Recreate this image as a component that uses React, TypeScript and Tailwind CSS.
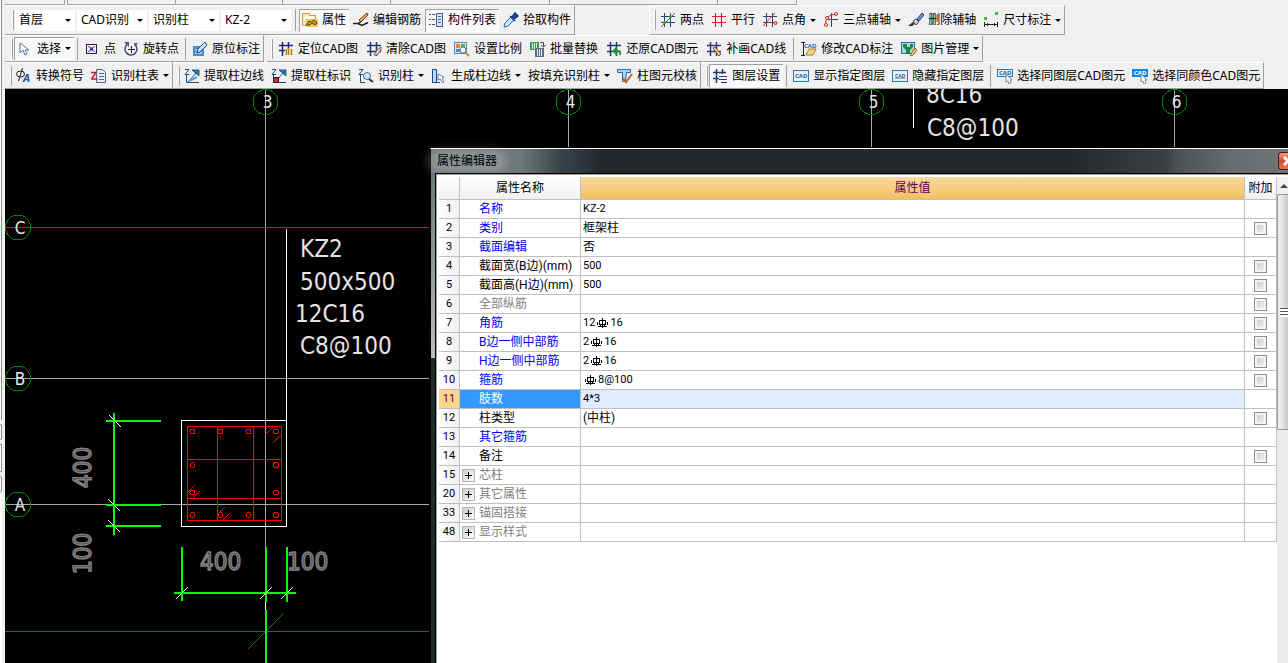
import type { ReactNode } from "react";
import clsx from "clsx";

const grid = "M4.500 1v14M10.500 1v14M1 4.500h14M1 10.500h14";

const icons = {
  cursor: <path d="M3 2v10l3-3 2 5 2-1-2-4h4z" fill="#fff" stroke="#5a6f9a" />,
  point: (
    <>
      <rect x="2.5" y="3.5" width="10" height="9" fill="#eef" stroke="#23235f" />
      <path d="M4 5l7 6M11 5l-7 6" stroke="#d22" />
      <rect x="6" y="6.500" width="3" height="3" fill="#23c" />
    </>
  ),
  rotate: (
    <>
      <path d="M4 3.500a6 6 0 1 0 8 0" fill="none" stroke="#3c4f7c" strokeWidth="1.500" />
      <path d="M1 1h5v5zM15 2l-4 0 1 4z" fill="#3c5f8c" />
      <path d="M8.500 5v7M5 8.500h7" stroke="#222" />
    </>
  ),
  annotate: (
    <>
      <rect x="1" y="5" width="11" height="10" fill="#4d8bd0" />
      <path d="M3 9h7M3 12h7" stroke="#fff" />
      <path d="M5 12l1-4 7-7 2 3-7 7z" fill="#cfe3f8" stroke="#1d4f93" />
    </>
  ),
  props: (
    <>
      <path d="M0.500 1.500h7v2h6v10h-13z" fill="#fbe7b5" stroke="#d09a45" />
      <path d="M2 5.500h11" stroke="#fff" strokeWidth="2" />
      <rect x="4" y="7" width="12" height="8" fill="#f0c453" />
      <path d="M4 13l3-4 2 1 3-2 3 3-2 2-3-2-2 2z" fill="#c89a2c" stroke="#5b4310" />
    </>
  ),
  pen: (
    <>
      <path d="M6 8l8-7 1 2-7 7z" fill="#f2b05c" stroke="#6b3513" />
      <path d="M0 11.500h5l3-2M5 11.500l4 2 6-3" fill="none" stroke="#222" strokeWidth="1.500" />
    </>
  ),
  list: (
    <>
      <rect x="8.500" y="1.500" width="6" height="13" fill="#dce9fa" stroke="#3b5f99" />
      <path d="M10 4.500h3M10 7.500h3M10 10.500h3" stroke="#3b5f99" />
      <path d="M1 2.500h2M1 7.500h2M1 12.500h2M4 2.500h3M4 7.500h3M4 12.500h3" stroke="#456" />
    </>
  ),
  pick: (
    <>
      <path d="M1 15l1-4 6-6 3 3-6 6z" fill="#cfe6fb" stroke="#2a69ad" />
      <path d="M7 4l5 5M9 5l3-4 3 3-4 3z" fill="#1d4aa0" stroke="#163c80" strokeWidth="1.500" />
    </>
  ),
  twoPoint: (
    <>
      <path d={grid} stroke="#3b3f7d" />
      <path d="M1 15L15 1" stroke="#c33" />
      <circle cx="10.500" cy="4.500" r="1.500" fill="#2a2" />
      <circle cx="4.500" cy="10.500" r="1.500" fill="#2a2" />
    </>
  ),
  parallel: (
    <>
      <path d="M4.500 1v14M10.500 1v14" stroke="#3b3f7d" />
      <path d="M1 4.500h14M1 10.500h14" stroke="#d22" />
    </>
  ),
  angle: (
    <>
      <path d={grid} stroke="#3b3f7d" />
      <path d="M1 14L13 1" stroke="#d22" />
      <circle cx="13.500" cy="11" r="1.500" fill="#fbb" stroke="#d22" />
    </>
  ),
  threePoint: (
    <>
      <path d="M8.500 1v14M3 7.500h12" stroke="#3b3f7d" />
      <path d="M3 13Q1 3 13 2" fill="none" stroke="#d22" />
      <circle cx="3" cy="13" r="1.500" fill="#fff" stroke="#d22" />
      <circle cx="4" cy="6" r="1.500" fill="#fff" stroke="#d22" />
      <circle cx="13" cy="2" r="1.500" fill="#fff" stroke="#d22" />
    </>
  ),
  eraseAxis: (
    <>
      <path d="M9 7l5-6 2 2-5 6z" fill="#6c93d4" stroke="#27457f" />
      <path d="M5 9l3-2 3 3-3 3z" fill="#e6c4dc" stroke="#555" />
      <path d="M0 14l5-4 2 2-3 2z" fill="#25324f" />
    </>
  ),
  dimension: (
    <>
      <rect x="1" y="5" width="3" height="3" fill="#4b4" />
      <rect x="12" y="0" width="3" height="3" fill="#4b4" />
      <path d="M1.500 10v5M14.500 10v5M2 12.500h12M4.500 11v3M11.500 11v3" stroke="#222" />
    </>
  ),
  locate: (
    <>
      <path d="M4.500 1v14M10.500 1v8M1 4.500h14M1 9.500h8" stroke="#22227c" strokeWidth="1.500" />
      <path d="M7 8h8v6H7z" fill="#f1cf7d" />
      <path d="M8.500 8v6M10.500 7v7M13.500 8v6" stroke="#a97b22" />
    </>
  ),
  clean: (
    <>
      <path d={grid} stroke="#1c3a66" strokeWidth="1.500" />
      <path d="M8 14l3-5 4-3v3l-4 5z" fill="#f2d9a3" stroke="#6d5690" />
    </>
  ),
  scale: (
    <>
      <rect x="0.500" y="1.500" width="12" height="11" fill="#d9ebfb" stroke="#5b87b5" />
      <rect x="2" y="3" width="4" height="4" fill="#e8853a" />
      <rect x="7" y="3" width="4" height="4" fill="#58a858" />
      <rect x="2" y="8" width="4" height="3" fill="#4a85d0" />
      <circle cx="9" cy="9" r="3" fill="#eef8ff" stroke="#678" />
      <path d="M11 11l4 4" stroke="#c78b3c" strokeWidth="2" />
    </>
  ),
  replace: (
    <>
      <rect x="0" y="1" width="9" height="8" fill="#3f9a55" />
      <path d="M2.500 2v6M4.500 2v6M6.500 2v6" stroke="#d5f2dc" />
      <path d="M10 1.500h3.500v4M11 4l2.500 2L16 4" fill="none" stroke="#334a66" />
      <rect x="5" y="7" width="9" height="9" fill="#5b6b80" />
      <path d="M7.500 8v7M9.500 8v7M11.500 8v7" stroke="#e8edf3" />
    </>
  ),
  restore: (
    <>
      <path d={grid} stroke="#1c3a66" strokeWidth="1.500" />
      <path d="M8 10h4q3 0 2 4M11 6.500l-3.500 3.500 3.500 3.500" fill="none" stroke="#26963a" strokeWidth="2" />
    </>
  ),
  draw: (
    <>
      <path d={grid} stroke="#34347a" strokeWidth="1.500" />
      <path d="M7 7l2-1 6 7-2 2z" fill="#f0cb7b" stroke="#77592a" />
    </>
  ),
  editNote: (
    <>
      <path d="M0 1.500h4M2.500 2v12M0 14.500h4" stroke="#222" fill="none" />
      <text x="3" y="7" fontSize="6" fontWeight="700" fill="#1c66b8">CAD</text>
      <path d="M5 14l3-6h7l-3 6z" fill="#f3d58b" stroke="#a87e2d" />
    </>
  ),
  image: (
    <>
      <rect x="0.500" y="1.500" width="13" height="11" fill="#a6d6f6" stroke="#2b6aa5" />
      <path d="M2 3h4v3h3V3h3v3L9 9v3H5V9L2 6z" fill="#1f8a35" />
      <path d="M9 14l5-7 2 2-5 6z" fill="#f3c767" stroke="#8a6521" />
    </>
  ),
  symbol: (
    <>
      <ellipse cx="4.500" cy="6" rx="4" ry="3" fill="none" stroke="#222" />
      <path d="M6.500 0L2.500 13" stroke="#222" />
      <text x="7" y="14" fontSize="11" fontStyle="italic" fontWeight="700" fill="#1d56a5">A</text>
    </>
  ),
  columnTable: (
    <>
      <path d="M5.500 1.500h6l3 3v10h-9z" fill="#e7eefb" stroke="#51678e" />
      <path d="M8 5.500h5M8 8.500h5M8 11.500h5" stroke="#51678e" />
      <path d="M0 4.500h5L0.500 11h6" fill="none" stroke="#c21f2c" strokeWidth="1.500" />
    </>
  ),
  edgeLine: (
    <>
      <path d="M1 1.500h4l-4 5h4M2.500 7v7.500H15" fill="none" stroke="#1c4e80" />
      <path d="M4 14L13 4M8 2h7v6z" fill="#2a7ab5" stroke="#1c5a92" />
      <path d="M5 13l8-4" stroke="#69c" strokeWidth="2" />
    </>
  ),
  edgeMark: (
    <>
      <path d="M1 1.500h4l-4 5h4M2.500 7v7.500H15" fill="none" stroke="#1c4e80" />
      <path d="M4 14L13 4M8 2h7v6z" fill="#2a7ab5" stroke="#1c5a92" />
      <rect x="2.500" y="9.500" width="5" height="5" fill="#c8302a" stroke="#223" />
    </>
  ),
  findColumn: (
    <>
      <path d="M1 1.500h4l-4 5h4M2.500 7v7.500H7" fill="none" stroke="#1c4e80" />
      <circle cx="9" cy="8" r="3.500" fill="#cfe9f7" stroke="#4d708e" />
      <path d="M11 11l4 3" stroke="#333" strokeWidth="2" />
    </>
  ),
  makeEdge: (
    <>
      <path d="M1.500 1.500h4v13h-4z" fill="#bcd6f5" stroke="#23458a" />
      <path d="M1 14.500h8" stroke="#23458a" />
      <path d="M7 6v6l2-1 3 4 1-1-2-4 2-1z" fill="#fff" stroke="#6f7f9a" />
    </>
  ),
  check: (
    <>
      <path d="M0.500 1.500h13v3h-4l-1 9h-3v-9h-5z" fill="#a8d4f2" stroke="#1f6ba5" />
      <path d="M6 10l3 4 6-8" fill="none" stroke="#b5652c" strokeWidth="2" />
    </>
  ),
  layers: (
    <>
      <path d="M4.500 1v14M10.500 1v5M1 4.500h13M1 10.500h6" stroke="#1c3a66" strokeWidth="1.500" />
      <path d="M7 8.500h8M7 11.500h8M9 14.500h6" stroke="#23309a" />
    </>
  ),
  cadShow: (
    <>
      <rect x="0.500" y="2.500" width="15" height="11" fill="#e8f4fd" stroke="#2779b8" />
      <text x="2" y="10" fontSize="6" fontWeight="700" fill="#1566ad">CAD</text>
    </>
  ),
  cadHide: (
    <>
      <rect x="0.500" y="2.500" width="15" height="11" fill="#e8f4fd" stroke="#2779b8" />
      <text x="3" y="10" fontSize="5" fontWeight="700" fill="#345f8d">CAD</text>
      <path d="M2 10.500h12" stroke="#9bb" />
    </>
  ),
  cadLayer: (
    <>
      <rect x="0.500" y="1.500" width="15" height="7" fill="#e8f4fd" stroke="#2779b8" />
      <text x="2" y="7" fontSize="6" fontWeight="700" fill="#1566ad">CAD</text>
      <path d="M9 6v8l2-1 1 3 2-1-1-3h2z" fill="#fff" stroke="#7c8795" />
    </>
  ),
  cadColor: (
    <>
      <rect x="0" y="1" width="16" height="8" fill="#1687e8" />
      <text x="2" y="7" fontSize="6" fontWeight="700" fill="#fff">CAD</text>
      <path d="M9 6v8l2-1 1 3 2-1-1-3h2z" fill="#fff" stroke="#7c8795" />
    </>
  ),
};

type IconName = keyof typeof icons;

function Arrow() {
  return <span className="border-x-[3px] border-t-[3px] border-x-transparent border-t-black" />;
}

function Tool({
  icon,
  label,
  menu,
  pressed,
}: {
  icon?: IconName;
  label: string;
  menu?: boolean;
  pressed?: boolean;
}) {
  return (
    <button
      type="button"
      className={clsx(
        "flex h-[23px] shrink-0 items-center gap-1 px-[3px] whitespace-nowrap",
        pressed && "bg-[#f9f9f9] shadow-[inset_1px_1px_0_#a0a0a0,inset_-1px_-1px_0_#fff]",
      )}
    >
      {icon && (
        <svg viewBox="0 0 16 16" className="size-4 shrink-0" aria-hidden="true">
          {icons[icon]}
        </svg>
      )}
      <span>{label}</span>
      {menu && <Arrow />}
    </button>
  );
}

function Bar({ children, className = "gap-px pl-[5px]" }: { children: ReactNode; className?: string }) {
  return (
    <div
      className={clsx(
        "flex shrink-0 items-center border-t border-r border-b border-t-white border-r-[#a0a0a0] border-b-[#a0a0a0]",
        className,
      )}
    >
      <span className="h-5 w-0.5 border-r border-l border-l-white border-r-[#a0a0a0]" />
      {children}
    </div>
  );
}

function Separator() {
  return <span className="mx-0.5 h-[22px] w-px bg-[#a0a0a0]" />;
}

function Combo({ value, label, className }: { value: string; label: string; className: string }) {
  return (
    <div className={clsx("relative mr-px", className)}>
      <select
        aria-label={label}
        defaultValue={value}
        className="block h-[21px] w-full appearance-none bg-white pl-1 outline-none"
      >
        <option>{value}</option>
      </select>
      <span className="pointer-events-none absolute inset-y-0 right-0 flex w-3.5 items-center justify-center">
        <Arrow />
      </span>
    </div>
  );
}

function Toolbars() {
  return (
    <header className="overflow-hidden bg-[#f0f0f0]">
      <div className="flex h-[5px]">
        <div className="w-[60px] border-r border-b border-[#a0a0a0]" />
        <div className="ml-0.5 w-[109px] border-x border-b border-[#a0a0a0]" />
        <div className="w-[107px] border-r border-b border-[#a0a0a0]" />
        <div className="w-[108px] border-r border-b border-[#a0a0a0]" />
        <div className="w-[159px] border-r border-b border-[#a0a0a0]" />
        <div className="w-[168px] border-r border-b border-[#a0a0a0]" />
        <div className="w-[79px] border-r border-b border-[#a0a0a0]" />
      </div>
      <div className="flex h-[30px] gap-[74px]">
        <Bar className="gap-px pl-[7px]">
          <Combo label="楼层" value="首层" className="w-[60px]" />
          <Combo label="构件类型" value="CAD识别" className="w-[70px]" />
          <Combo label="构件" value="识别柱" className="w-[70px]" />
          <Combo label="构件名称" value="KZ-2" className="w-[70px]" />
          <Separator />
          <Tool icon="props" label="属性" pressed />
          <Tool icon="pen" label="编辑钢筋" />
          <Tool icon="list" label="构件列表" pressed />
          <Tool icon="pick" label="拾取构件" />
        </Bar>
        <Bar className="gap-px border-l border-l-white pl-1">
          <Tool icon="twoPoint" label="两点" />
          <Tool icon="parallel" label="平行" />
          <Tool icon="angle" label="点角" menu />
          <Tool icon="threePoint" label="三点辅轴" menu />
          <Tool icon="eraseAxis" label="删除辅轴" />
          <Tool icon="dimension" label="尺寸标注" menu />
        </Bar>
      </div>
      <div className="flex h-[27px] gap-[3px]">
        <Bar className="gap-px pl-1.5">
          <Tool icon="cursor" label="选择" menu pressed />
          <Separator />
          <Tool icon="point" label="点" />
          <Tool icon="rotate" label="旋转点" />
          <Separator />
          <Tool icon="annotate" label="原位标注" />
        </Bar>
        <Bar className="gap-0.5 pl-1">
          <Tool icon="locate" label="定位CAD图" />
          <Tool icon="clean" label="清除CAD图" />
          <Tool icon="scale" label="设置比例" />
          <Tool icon="replace" label="批量替换" />
          <Tool icon="restore" label="还原CAD图元" />
          <Tool icon="draw" label="补画CAD线" />
          <Separator />
          <Tool icon="editNote" label="修改CAD标注" />
          <Tool icon="image" label="图片管理" menu />
        </Bar>
      </div>
      <div className="flex h-[27px]">
        <Bar>
          <Tool icon="symbol" label="转换符号" />
          <Tool icon="columnTable" label="识别柱表" menu />
        </Bar>
        <Bar>
          <Tool icon="edgeLine" label="提取柱边线" />
          <Tool icon="edgeMark" label="提取柱标识" />
          <Tool icon="findColumn" label="识别柱" menu />
          <Tool icon="makeEdge" label="生成柱边线" menu />
          <Tool label="按填充识别柱" menu />
          <Tool icon="check" label="柱图元校核" />
        </Bar>
        <Bar>
          <Tool icon="layers" label="图层设置" pressed />
          <Separator />
          <Tool icon="cadShow" label="显示指定图层" />
          <Tool icon="cadHide" label="隐藏指定图层" />
          <Separator />
          <Tool icon="cadLayer" label="选择同图层CAD图元" />
          <Tool icon="cadColor" label="选择同颜色CAD图元" />
        </Bar>
      </div>
    </header>
  );
}

const bubbles = [
  { label: "3", x: 260.5, y: 13 },
  { label: "4", x: 563.5, y: 13 },
  { label: "5", x: 866.5, y: 13 },
  { label: "6", x: 1169.5, y: 13 },
  { label: "C", x: 13, y: 138.5 },
  { label: "B", x: 13, y: 289.5 },
  { label: "A", x: 13, y: 415.5 },
];

const rebars = [
  [187.5, 342.5], [215.5, 342.5], [243.5, 342.5], [271, 342.5],
  [187.5, 376], [271, 376],
  [187.5, 403.5], [271, 403.5],
  [187.5, 426], [215.5, 426], [243.5, 426], [271, 426],
];

function Drawing() {
  return (
    <svg
      className="absolute inset-0 size-full font-['DejaVu_Sans_Condensed','DejaVu_Sans',sans-serif]"
      fill="none"
      shapeRendering="crispEdges"
    >
      {/* axes */}
      <path d="M260.5 0V458M563.5 0V58M866.5 0V58M1169.5 0V58M0 289.5H424M0 415.5H424" stroke="#a9a9a9" />
      <path d="M0 138.5H424" stroke="#f00" />
      <path d="M0 542.5H424M243 560L279 524" stroke="#008000" />
      {bubbles.map((b) => (
        <g key={b.label}>
          <circle cx={b.x} cy={b.y} r="12.5" stroke="#008000" />
          <text x={b.x + 2} y={b.y + 6} textAnchor="middle" fontSize="17" fill="#e8e8e8">
            {b.label}
          </text>
        </g>
      ))}

      {/* column section */}
      <path d="M281.5 140V331M176.5 331.5h105v106h-105zM908.5 0V39M260.5 513V521" stroke="#fff" />
      <path
        d="M182.5 337.5h94v94h-94zM212.5 338v93M248.5 338v93M183 370.5h93M183 409.5h93M260 346l8-8M268 354l8-8M183 403l7-7M188 409l7-7M213 425l7-7M218 431l7-7"
        stroke="#f00"
      />
      {rebars.map(([x, y]) => (
        <circle key={`${x}-${y}`} cx={x} cy={y} r="2.500" stroke="#f00" />
      ))}

      {/* dimensions */}
      <path
        d="M109 324V446M101 332H156M101 416H156M101 437H156M177 458V512M261 458V513M282 458V513M169 504H291M261 521V1200"
        stroke="#0f0"
        strokeWidth="2"
      />
      <path
        d="M104 326l12 12M103 410l12 12M103 431l12 12M171 510l12-12M255 510l12-12M276 510l12-12"
        stroke="#fff"
      />
      <g fontSize="24" fill="#222" stroke="#808080" strokeWidth="1.500">
        <text x="195" y="481">400</text>
        <text x="282" y="481">100</text>
        <text transform="translate(86 399) rotate(-90)">400</text>
        <text transform="translate(86 485) rotate(-90)">100</text>
      </g>
      <g fontSize="24" fill="#e4e4e4">
        <text x="295" y="168">KZ2</text>
        <text x="295" y="201">500x500</text>
        <text x="290" y="233">12C16</text>
        <text x="295" y="265">C8@100</text>
        <text x="921" y="14">8C16</text>
        <text x="922" y="47">C8@100</text>
      </g>
    </svg>
  );
}

type Row = {
  no: number;
  name: string;
  value?: string;
  tone?: "blue" | "gray";
  check?: boolean;
  group?: boolean;
  selected?: boolean;
};

const rows: Row[] = [
  { no: 1, name: "名称", value: "KZ-2", tone: "blue" },
  { no: 2, name: "类别", value: "框架柱", tone: "blue", check: true },
  { no: 3, name: "截面编辑", value: "否", tone: "blue" },
  { no: 4, name: "截面宽(B边)(mm)", value: "500", check: true },
  { no: 5, name: "截面高(H边)(mm)", value: "500", check: true },
  { no: 6, name: "全部纵筋", tone: "gray", check: true },
  { no: 7, name: "角筋", value: "12Φ16", tone: "blue", check: true },
  { no: 8, name: "B边一侧中部筋", value: "2Φ16", tone: "blue", check: true },
  { no: 9, name: "H边一侧中部筋", value: "2Φ16", tone: "blue", check: true },
  { no: 10, name: "箍筋", value: "Φ8@100", tone: "blue", check: true },
  { no: 11, name: "肢数", value: "4*3", tone: "blue", selected: true },
  { no: 12, name: "柱类型", value: "(中柱)", check: true },
  { no: 13, name: "其它箍筋", tone: "blue" },
  { no: 14, name: "备注", check: true },
  { no: 15, name: "芯柱", tone: "gray", group: true },
  { no: 20, name: "其它属性", tone: "gray", group: true },
  { no: 33, name: "锚固搭接", tone: "gray", group: true },
  { no: 48, name: "显示样式", tone: "gray", group: true },
];

// HRB400 bar sign, drawn because no font carries it
function RebarSign() {
  return (
    <svg viewBox="0 0 11 10" className="mx-0.5 h-2.5 w-[11px]" fill="none" stroke="#000" role="img" aria-label="三级钢">
      <path d="M2.500 2.500h6v4h-6zM0.500 4v3M5.500 0v10M3.500 6v3M7.500 6v3M1 8.500h9M10.500 4v3" shapeRendering="crispEdges" />
    </svg>
  );
}

function Value({ text }: { text: string }) {
  const [before, after] = text.split("Φ");
  if (after === undefined) return <>{text}</>;
  return (
    <>
      {before}
      <RebarSign />
      {after}
    </>
  );
}

function nameColor(row: Row) {
  if (row.selected) return "bg-[#3399ff] text-white";
  if (row.tone === "blue") return "text-[#0000ff]";
  if (row.tone === "gray") return "text-[#808080]";
  return "text-black";
}

function PropertyTable() {
  return (
    <table className="w-full table-fixed border-separate border-spacing-0 font-[Roboto,'Noto_Sans_CJK_SC',sans-serif] text-xs leading-[18px] [&_td]:border-r [&_td]:border-b [&_td]:border-[#c0c0c0] [&_td]:p-0 [&_td]:align-top [&_th]:border-r [&_th]:border-b [&_th]:border-[#c0c0c0] [&_th]:p-0 [&_th]:font-normal">
      <colgroup>
        <col className="w-[21px]" />
        <col className="w-[121px]" />
        <col />
        <col className="w-8" />
      </colgroup>
      <thead>
        <tr className="h-[23px] bg-linear-to-b from-white to-[#f0f0f0]">
          <th />
          <th scope="col">属性名称</th>
          <th scope="col" className="bg-linear-to-b from-[#f9d99f] to-[#f1c15f] text-[#5a0050]">
            属性值
          </th>
          <th scope="col" className="whitespace-nowrap">附加</th>
        </tr>
      </thead>
      <tbody>
        {rows.map((row) => (
          <tr key={row.no} className="h-[19px]">
            <td
              className={clsx(
                "text-center text-[11px]",
                row.selected ? "bg-[#ffd58c] text-[#5a0050]" : "bg-linear-to-r from-white to-[#f0f0f0]",
              )}
            >
              {row.no}
            </td>
            <td className={nameColor(row)}>
              <div className="flex h-[18px] items-center whitespace-nowrap">
                <span className="flex w-[19px] shrink-0 pl-0.5">
                  {row.group && (
                    <button
                      type="button"
                      aria-label={`展开${row.name}`}
                      className="size-[13px] border border-[#b4b4b4] bg-linear-to-br from-[#c8ccd6] to-white"
                    >
                      <svg viewBox="0 0 11 11" className="size-[11px]" stroke="#000" shapeRendering="crispEdges">
                        <path d="M2 5.500h7M5.500 2v7" />
                      </svg>
                    </button>
                  )}
                </span>
                {row.name}
              </div>
            </td>
            <td className={clsx(row.selected && "bg-[#deeeff]")}>
              <div
                className={clsx(
                  "flex h-[18px] items-center pl-0.5 whitespace-nowrap",
                  /[一-龥]/.test(row.value ?? "") ? "text-xs" : "text-[11px]",
                )}
              >
                <Value text={row.value ?? ""} />
              </div>
            </td>
            <td>
              {row.check && (
                <div className="flex h-[18px] items-center justify-center">
                  <input
                    type="checkbox"
                    aria-label={`附加${row.name}`}
                    className="size-[13px] appearance-none border border-[#8e8f8f] bg-linear-to-br from-[#c3c7d0] to-[#f6f6f6] shadow-[inset_0_0_0_2px_#f4f4f4]"
                  />
                </div>
              )}
            </td>
          </tr>
        ))}
      </tbody>
    </table>
  );
}

function PropertyEditor() {
  return (
    <section className="absolute top-[59px] right-0 bottom-0 left-[425px] flex flex-col border-t border-l border-t-white border-l-black bg-[linear-gradient(90deg,#6f7678_0px,#70777a_90px,#3c4347_130px,#353d47_141px,#23282b_170px,#22282b_640px,#3c4145_735px,#4b4f54_745px,#696c6f_800px,#737577_858px)]">
      <div className="flex h-6 shrink-0 items-center justify-between">
        <h2 className="rounded-full bg-white/20 px-1.5 text-xs text-black shadow-[0_0_8px_4px_rgba(255,255,255,0.2)]">
          属性编辑器
        </h2>
        <button
          type="button"
          aria-label="关闭"
          className="h-[18px] w-2.5 overflow-hidden rounded-l-sm border border-r-0 border-[#4c1a12] bg-linear-to-b from-[#f0a08c] via-[#d0472b] to-[#e07a5c] pl-1"
        >
          <svg viewBox="0 0 10 10" className="size-2.5" stroke="#fff" strokeWidth="3">
            <path d="M1 1l8 8M9 1l-8 8" />
          </svg>
        </button>
      </div>
      <div className="flex min-h-0 flex-1">
        <div className="flex w-1 shrink-0 flex-col">
          <div className="h-[185px] bg-linear-to-b from-[#6d7678] to-[#b9bebe]" />
          <div className="flex-1 bg-[#22292c]" />
        </div>
        <div className="flex min-w-0 flex-1 border-t border-l border-black bg-white">
          <div className="flex min-w-0 flex-1 border-t border-l border-[#a0a0a0] pt-0.5 pl-0.5">
            <div className="min-w-0 flex-1">
              <PropertyTable />
            </div>
            <div className="flex w-[11px] shrink-0 flex-col overflow-hidden bg-[#ececec]">
              <div className="flex h-[17px] shrink-0 items-center justify-end bg-[#f0f0f0]">
                <span className="border-x-4 border-b-4 border-x-transparent border-b-[#444]" />
              </div>
              <div className="flex h-[236px] shrink-0 items-center justify-end rounded-l-xs border border-r-0 border-[#979797] bg-linear-to-r from-[#f5f5f5] to-[#c9c9cb]">
                <div className="h-[9px] w-2 bg-[repeating-linear-gradient(#555_0px,#555_1px,#fff_1px,#fff_3px)]" />
              </div>
            </div>
          </div>
        </div>
      </div>
    </section>
  );
}

export default function App() {
  return (
    <div className="flex min-h-screen bg-[#f0f0f0] font-['Noto_Sans','Noto_Sans_CJK_SC',sans-serif] text-xs leading-[18px] text-black">
      <aside className="flex w-[5px] shrink-0 flex-col gap-1 bg-[#f0f0f0]">
        <div className="h-[420px] w-0.5 border-r border-[#8c8c8c] bg-white" />
        <div className="h-4 w-0.5 rounded-r-sm border-y border-r border-[#8c8c8c] bg-white" />
        <div className="h-7 w-0.5 border-y border-r border-[#8c8c8c] bg-white" />
        <div className="h-4 w-0.5 rounded-r-sm border-y border-r border-[#8c8c8c] bg-white" />
        <div className="w-0.5 flex-1 bg-white" />
      </aside>
      <div className="flex min-w-0 flex-1 flex-col">
        <Toolbars />
        <main className="relative min-h-[560px] flex-1 overflow-hidden bg-black">
          <Drawing />
          <PropertyEditor />
        </main>
      </div>
    </div>
  );
}
